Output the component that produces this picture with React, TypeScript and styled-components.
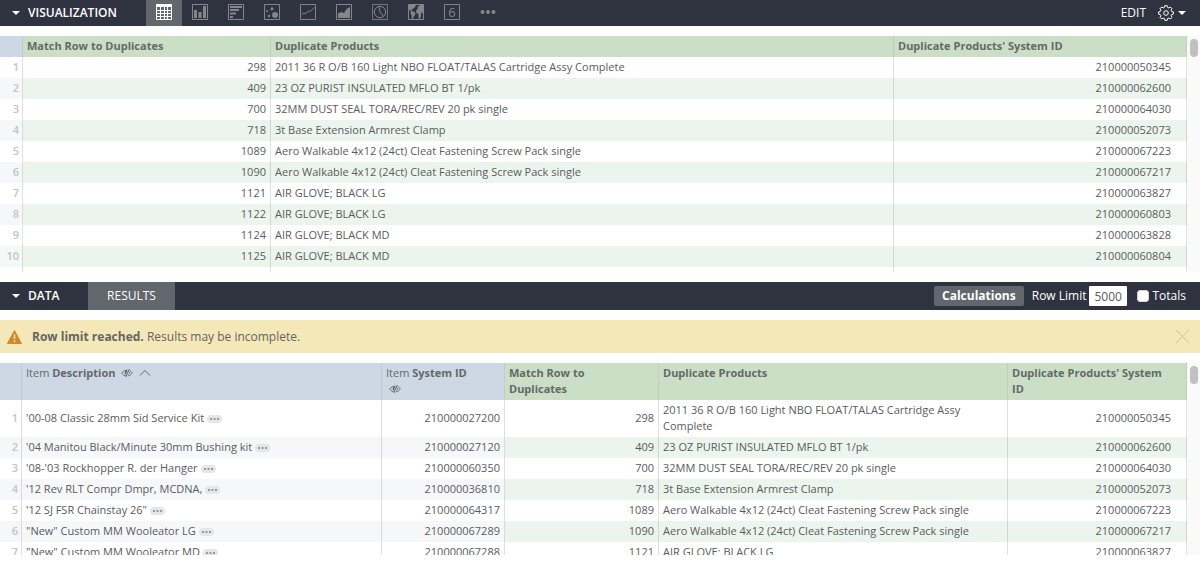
import React from "react";
import styled, { createGlobalStyle, css } from "styled-components";

const GlobalStyle = createGlobalStyle`
  * { box-sizing: border-box; }
  body {
    margin: 0;
    background: #fff;
    color: #5a5b5e;
    font-family: "Open Sans", "Noto Sans", sans-serif;
    font-size: 11px;
    line-height: 16px;
  }
  button, input { font-family: inherit; }
`;

const Page = styled.main`
  display: flex;
  flex-direction: column;
  gap: 10px;
  height: 100vh;
  padding-bottom: 8px;
  overflow: hidden;
`;

const Bar = styled.header<{ $height: number }>`
  display: flex;
  flex: none;
  align-items: stretch;
  height: ${(p) => p.$height}px;
  background: #2e333f;
  color: #fff;
  font-size: 12px;
`;

const BarButton = styled.button`
  display: flex;
  align-items: center;
  border: 0;
  padding: 0;
  background: none;
  color: inherit;
  font-size: 12px;
  line-height: 16px;
  cursor: pointer;
`;

const Title = styled(BarButton)<{ $width: number }>`
  flex: none;
  gap: 8px;
  width: ${(p) => p.$width}px;
  padding-left: 12px;
  font-weight: 600;
`;

const Caret = styled.span`
  border: 4px solid transparent;
  border-top-color: #fff;
  border-bottom-width: 0;
`;

const ChartTab = styled(BarButton)<{ $active?: boolean }>`
  justify-content: center;
  width: 36px;
  padding-bottom: 2px;
  background: ${(p) => (p.$active ? "#62666d" : "none")};
  color: ${(p) => (p.$active ? "#fff" : "#83868d")};
`;

const ResultsTab = styled(BarButton)`
  justify-content: center;
  width: 87px;
  background: #62666d;
`;

const Actions = styled.div`
  display: flex;
  align-items: center;
  margin-left: auto;
  padding-right: 14px;
`;

const EditButton = styled(BarButton)`
  margin-right: 12px;
`;

const GearButton = styled(BarButton)`
  gap: 4px;
`;

const Calculations = styled.button`
  height: 20px;
  margin-right: 8px;
  border: 0;
  border-radius: 2px;
  padding: 0 8px;
  background: #62666d;
  color: #fff;
  font-size: 12px;
  font-weight: 700;
  line-height: 20px;
  cursor: pointer;
`;

const Field = styled.label`
  display: flex;
  align-items: center;
  gap: 3px;
`;

const LimitInput = styled.input`
  width: 38px;
  height: 20px;
  margin-right: 10px;
  border: 0;
  border-radius: 1px;
  padding: 0 5px;
  background: #fff;
  color: #5a5b5e;
  font-size: 12px;
`;

const Checkbox = styled.input`
  appearance: none;
  width: 12px;
  height: 12px;
  margin: 0;
  border: 1px solid #d5d5d5;
  border-radius: 3px;
  background: #fff;
`;

const Warning = styled.div`
  display: flex;
  flex: none;
  align-items: center;
  gap: 10px;
  height: 33px;
  padding: 0 10px 0 7px;
  background: #f4e7b8;
  color: #66655f;
  font-size: 12px;
`;

const Dismiss = styled.button`
  display: flex;
  margin-left: auto;
  border: 0;
  padding: 0;
  background: none;
  color: #c9c19f;
  cursor: pointer;
`;

const Pane = styled.section<{ $height?: number }>`
  display: flex;
  flex: ${(p) => (p.$height ? `0 0 ${p.$height}px` : "1 1 0")};
  min-height: 0;
  overflow: hidden;
`;

const TableArea = styled.div`
  flex: 1;
  min-width: 0;
  overflow: hidden;
`;

const Track = styled.div`
  flex: none;
  width: 13px;
  padding: 3px 2px 0 3px;
  background: #fafafa;
`;

const Thumb = styled.div`
  height: 18px;
  border-radius: 4px;
  background: #c1c1c1;
`;

const Table = styled.table`
  width: 100%;
  table-layout: fixed;
  border-collapse: separate;
  border-spacing: 0;
`;

type Kind = "dimension" | "measure";

const cell = css`
  border-right: 1px solid rgba(0, 0, 0, 0.12);
  padding: 2px 4px 3px;
`;

const HeadCell = styled.th<{ $kind: Kind }>`
  ${cell}
  padding-right: 16px;
  border-right-color: rgba(0, 0, 0, 0.06);
  background: ${(p) => (p.$kind === "measure" ? "#cbdfc6" : "#ccd8e4")};
  color: #666869;
  text-align: left;
  vertical-align: top;
  font-weight: 700;
  &:first-child {
    padding: 0;
  }
`;

const Cell = styled.td<{ $kind: Kind; $right?: boolean }>`
  ${cell}
  text-align: ${(p) => (p.$right ? "right" : "left")};
  tr:nth-child(even) > & {
    background: ${(p) => (p.$kind === "measure" ? "#ecf5ed" : "#f6f7f9")};
  }
  &:last-child {
    padding-right: 15px;
  }
`;

const NumberCell = styled(Cell)`
  padding-left: 0;
  padding-right: 3px;
  color: #c2c3c5;
  font-weight: 600;
`;

const Light = styled.span`
  font-weight: 400;
`;

const HeadIcon = styled.span`
  display: inline-flex;
  margin-left: 3px;
  & + & {
    margin-left: 6px;
  }
`;

const More = styled.button`
  display: inline-flex;
  align-items: center;
  justify-content: center;
  width: 15px;
  height: 8px;
  margin-left: 3px;
  border: 0;
  border-radius: 4px;
  padding: 0;
  background: #e6e6e7;
  color: #97989a;
  vertical-align: middle;
  cursor: pointer;
`;

const charts: { name: string; art: React.ReactNode }[] = [
  {
    name: "Table",
    art: (
      <>
        <path d="M0 0h16v3H0z" fill="currentColor" stroke="none" />
        <path d="M.5 2v13.500h15V2M4.500 3v12.500M8.500 3v12.500M11.500 3v12.500M0 6.500h16M0 9.500h16M0 12.500h16" />
      </>
    ),
  },
  {
    name: "Column",
    art: (
      <>
        <path d="M.5.5h15v15H.5z" />
        <path d="M2 6h3v8H2zM6.500 8h3v6h-3zM11 2h3v12h-3z" fill="currentColor" stroke="none" />
      </>
    ),
  },
  {
    name: "Bar",
    art: (
      <>
        <path d="M.5.5h15v15H.5z" />
        <path d="M2 2h12v2H2zM2 5h9v2H2zM2 8.500h6v2H2zM2 12h3v2H2z" fill="currentColor" stroke="none" />
      </>
    ),
  },
  {
    name: "Scatter",
    art: (
      <>
        <path d="M.5.5h15v15H.5z" />
        <g fill="currentColor" stroke="none">
          <circle cx="11" cy="11" r="3" />
          <circle cx="8" cy="4.800" r="1.500" />
          <circle cx="3" cy="7" r="1" />
          <circle cx="5" cy="12" r="1.200" />
        </g>
      </>
    ),
  },
  {
    name: "Line",
    art: (
      <>
        <path d="M.5.5h15v15H.5z" />
        <path d="M2 10.500l2-1.500 2 .5L8.500 7l2 .3L14 3.500" />
      </>
    ),
  },
  {
    name: "Area",
    art: (
      <>
        <path d="M.5.5h15v15H.5z" />
        <path d="M2 14V9.500l3-1.500 3 1 3-4.500L14 3v11z" fill="currentColor" stroke="none" />
      </>
    ),
  },
  {
    name: "Pie",
    art: (
      <>
        <path d="M.5.5h15v15H.5z" strokeOpacity=".8" />
        <circle cx="8" cy="8" r="5.700" />
        <path d="M7 2.500L8 8l3.500 4.500" />
      </>
    ),
  },
  {
    name: "Map",
    art: (
      <>
        <path d="M.5.5h15v15H.5z" />
        <path
          d="M0 1h3l1-.5h4L7.500 2.500 6 4 4.500 5v1L3 5.500 3.500 7l2 .5L7.500 9 7 11l-1.500 2-.5 2.500H4L3.500 11 2.500 9 3 7.500 1.500 6 0 3.500zM8.500 6L10 4.500 9.500 3l2-1.500L13 .5h3V6l-1 .5.5 1.500-1 1.500L13.500 8l-.5 2v2.500L11.500 15l-1-.5V10L9 9.500 8 8z"
          fill="currentColor"
          stroke="none"
        />
      </>
    ),
  },
  {
    name: "Single value",
    art: (
      <>
        <path d="M.5.5h15v15H.5z" />
        <text x="8" y="12.500" textAnchor="middle" fontSize="13" fill="currentColor" stroke="none">
          6
        </text>
      </>
    ),
  },
  {
    name: "More",
    art: (
      <g fill="currentColor" stroke="none">
        <circle cx="2.500" cy="8" r="2" />
        <circle cx="8" cy="8" r="2" />
        <circle cx="13.500" cy="8" r="2" />
      </g>
    ),
  },
];

const Gear = () => {
  const points: string[] = [];
  for (let i = 0; i < 8; i++) {
    [-16, -9, 9, 16].forEach((offset, k) => {
      const angle = ((i * 45 + offset) * Math.PI) / 180;
      const radius = k === 1 || k === 2 ? 7.4 : 5.8;
      points.push(`${(8 + radius * Math.sin(angle)).toFixed(2)} ${(8 - radius * Math.cos(angle)).toFixed(2)}`);
    });
  }
  return (
    <svg width="16" height="16" viewBox="0 0 16 16" fill="none" stroke="currentColor" strokeLinejoin="round">
      <path d={`M${points.join("L")}Z`} />
      <circle cx="8" cy="8" r="2.300" />
    </svg>
  );
};

const HiddenEye = () => (
  <HeadIcon>
    <svg width="12" height="8" viewBox="0 0 12 8" fill="none" stroke="currentColor">
      <path d="M5 7Q2.500 6.500.6 4 3 1 6.500 1M8.800 1.600Q10.500 2.500 11.400 4 9.500 6.600 6.800 7" strokeWidth=".9" />
      <path d="M6.500 1.500Q3.500 1.200 3.700 4q.1 1.200 1 1.800z" fill="currentColor" stroke="none" />
      <path d="M8.600 2.800q.4 1.700-1 2.700" strokeWidth=".8" />
      <path d="M8.300 0L4.800 8" strokeWidth="1" />
    </svg>
  </HeadIcon>
);

const SortUp = () => (
  <HeadIcon>
    <svg width="12" height="8" viewBox="0 0 12 8" fill="none" stroke="currentColor">
      <path d="M1 6.500l5-5 5 5" />
    </svg>
  </HeadIcon>
);

const Ellipsis = () => (
  <More aria-label="More actions">
    <svg width="9" height="2" viewBox="0 0 9 2" fill="currentColor">
      <path d="M0 0h2v2H0zM3.500 0h2v2h-2zM7 0h2v2H7z" />
    </svg>
  </More>
);

const Scrollbar = () => (
  <Track>
    <Thumb />
  </Track>
);

const visualRows: [string, string, string][] = [
  ["298", "2011 36 R O/B 160 Light NBO FLOAT/TALAS Cartridge Assy Complete", "210000050345"],
  ["409", "23 OZ PURIST INSULATED MFLO BT 1/pk", "210000062600"],
  ["700", "32MM DUST SEAL TORA/REC/REV 20 pk single", "210000064030"],
  ["718", "3t Base Extension Armrest Clamp", "210000052073"],
  ["1089", "Aero Walkable 4x12 (24ct) Cleat Fastening Screw Pack single", "210000067223"],
  ["1090", "Aero Walkable 4x12 (24ct) Cleat Fastening Screw Pack single", "210000067217"],
  ["1121", "AIR GLOVE; BLACK LG", "210000063827"],
  ["1122", "AIR GLOVE; BLACK LG", "210000060803"],
  ["1124", "AIR GLOVE; BLACK MD", "210000063828"],
  ["1125", "AIR GLOVE; BLACK MD", "210000060804"],
];

const items: [string, string][] = [
  ["'00-08 Classic 28mm Sid Service Kit", "210000027200"],
  ["'04 Manitou Black/Minute 30mm Bushing kit", "210000027120"],
  ["'08-'03 Rockhopper R. der Hanger", "210000060350"],
  ["'12 Rev RLT Compr Dmpr, MCDNA,", "210000036810"],
  ["'12 SJ FSR Chainstay 26\"", "210000064317"],
  ["\"New\" Custom MM Wooleator LG", "210000067289"],
  ["\"New\" Custom MM Wooleator MD", "210000067288"],
];

const Columns = ({ widths }: { widths: (number | null)[] }) => (
  <colgroup>
    {widths.map((w, i) => (
      <col key={i} width={w ?? undefined} />
    ))}
  </colgroup>
);

export default function App() {
  return (
    <>
      <GlobalStyle />
      <Page>
        <Bar $height={26}>
          <Title $width={146}>
            <Caret />
            VISUALIZATION
          </Title>
          {charts.map((c, i) => (
            <ChartTab key={c.name} $active={i === 0} aria-label={c.name}>
              <svg width="16" height="16" viewBox="0 0 16 16" fill="none" stroke="currentColor">
                {c.art}
              </svg>
            </ChartTab>
          ))}
          <Actions>
            <EditButton>EDIT</EditButton>
            <GearButton aria-label="Settings">
              <Gear />
              <Caret />
            </GearButton>
          </Actions>
        </Bar>

        <Pane $height={236}>
          <TableArea>
            <Table>
              <Columns widths={[23, 248, null, 293]} />
              <thead>
                <tr>
                  <HeadCell $kind="dimension" />
                  <HeadCell $kind="measure">Match Row to Duplicates</HeadCell>
                  <HeadCell $kind="measure">Duplicate Products</HeadCell>
                  <HeadCell $kind="measure">Duplicate Products' System ID</HeadCell>
                </tr>
              </thead>
              <tbody>
                {visualRows.map(([match, product, id], i) => (
                  <tr key={id}>
                    <NumberCell $kind="dimension" $right>{i + 1}</NumberCell>
                    <Cell $kind="measure" $right>{match}</Cell>
                    <Cell $kind="measure">{product}</Cell>
                    <Cell $kind="measure" $right>{id}</Cell>
                  </tr>
                ))}
                <tr>
                  <NumberCell $kind="dimension">&nbsp;</NumberCell>
                  <Cell $kind="measure" />
                  <Cell $kind="measure" />
                  <Cell $kind="measure" />
                </tr>
              </tbody>
            </Table>
          </TableArea>
          <Scrollbar />
        </Pane>

        <Bar $height={28}>
          <Title $width={88}>
            <Caret />
            DATA
          </Title>
          <ResultsTab>RESULTS</ResultsTab>
          <Actions>
            <Calculations>Calculations</Calculations>
            <Field>
              Row Limit
              <LimitInput type="text" defaultValue="5000" />
            </Field>
            <Field>
              <Checkbox type="checkbox" />
              Totals
            </Field>
          </Actions>
        </Bar>

        <Warning role="alert">
          <svg width="15" height="14" viewBox="0 0 15 14">
            <path d="M7.500.5l7 13H.5z" fill="#cf8a2b" stroke="#cf8a2b" strokeLinejoin="round" />
            <path d="M7.500 4.500v4.500M7.500 10.300v1.600" stroke="#f4e7b8" strokeWidth="1.500" />
          </svg>
          <span>
            <strong>Row limit reached.</strong> Results may be incomplete.
          </span>
          <Dismiss aria-label="Dismiss">
            <svg width="15" height="15" viewBox="0 0 15 15" stroke="currentColor">
              <path d="M1 1l13 13M14 1L1 14" />
            </svg>
          </Dismiss>
        </Warning>

        <Pane>
          <TableArea>
            <Table>
              <Columns widths={[22, 360, 123, 154, null, 179]} />
              <thead>
                <tr>
                  <HeadCell $kind="dimension" />
                  <HeadCell $kind="dimension">
                    <Light>Item</Light> Description <HiddenEye />
                    <SortUp />
                  </HeadCell>
                  <HeadCell $kind="dimension">
                    <Light>Item</Light> System ID
                    <br />
                    <HiddenEye />
                  </HeadCell>
                  <HeadCell $kind="measure">Match Row to Duplicates</HeadCell>
                  <HeadCell $kind="measure">Duplicate Products</HeadCell>
                  <HeadCell $kind="measure">Duplicate Products' System ID</HeadCell>
                </tr>
              </thead>
              <tbody>
                {items.map(([description, itemId], i) => {
                  const [match, product, id] = visualRows[i];
                  return (
                    <tr key={itemId}>
                      <NumberCell $kind="dimension" $right>{i + 1}</NumberCell>
                      <Cell $kind="dimension">
                        {description}
                        <Ellipsis />
                      </Cell>
                      <Cell $kind="dimension" $right>{itemId}</Cell>
                      <Cell $kind="measure" $right>{match}</Cell>
                      <Cell $kind="measure">{product}</Cell>
                      <Cell $kind="measure" $right>{id}</Cell>
                    </tr>
                  );
                })}
              </tbody>
            </Table>
          </TableArea>
          <Scrollbar />
        </Pane>
      </Page>
    </>
  );
}
